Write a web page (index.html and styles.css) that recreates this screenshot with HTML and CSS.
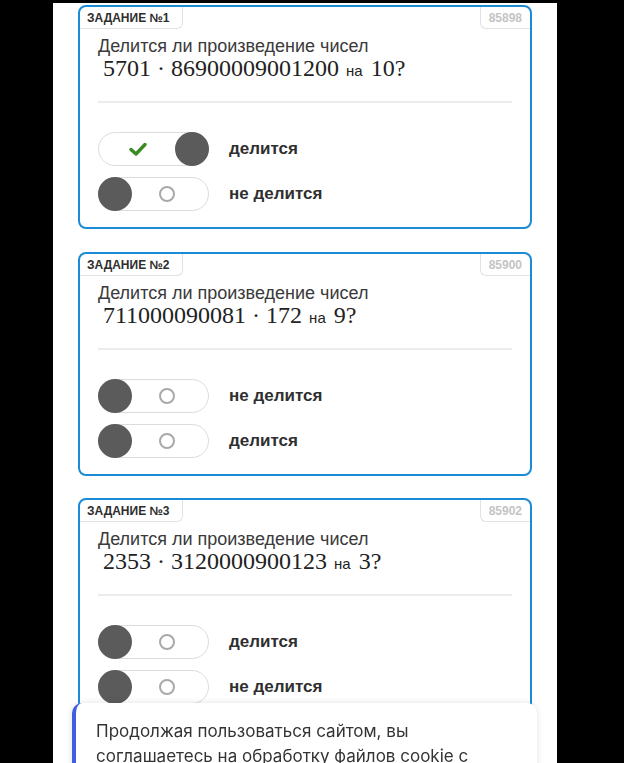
FILE: index.html
```html
<!DOCTYPE html>
<html lang="ru">
<head>
    <meta charset="UTF-8">
    <meta name="viewport" content="width=device-width, initial-scale=1.0">
    <title>Задания</title>
    <link rel="stylesheet" href="styles.css">
</head>
<body>
    <div class="page">
        <div class="task">
            <div class="task-head">
                <span class="task-tag">Задание №1</span>
                <span class="task-id">85898</span>
            </div>
            <div class="task-body">
                <p class="question">Делится ли произведение чисел</p>
                <p class="math"><span>5701</span><span class="op">·</span><span>86900009001200</span><span class="word">на</span><span>10?</span></p>
                <div class="rule"></div>
                <div class="options">
                    <div class="option on">
                        <span class="switch">
                            <svg class="check" width="18" height="14" viewBox="0 0 18 14"><path d="M2 7.5 L7 12 L16 2.5" fill="none" stroke="#3c8a23" stroke-width="3.4" stroke-linecap="round" stroke-linejoin="round"/></svg>
                            <span class="knob"></span>
                        </span>
                        <span class="option-text">делится</span>
                    </div>
                    <div class="option">
                        <span class="switch"><span class="knob"></span><span class="ring"></span></span>
                        <span class="option-text">не делится</span>
                    </div>
                </div>
            </div>
        </div>

        <div class="task">
            <div class="task-head">
                <span class="task-tag">Задание №2</span>
                <span class="task-id">85900</span>
            </div>
            <div class="task-body">
                <p class="question">Делится ли произведение чисел</p>
                <p class="math"><span>711000090081</span><span class="op">·</span><span>172</span><span class="word">на</span><span>9?</span></p>
                <div class="rule"></div>
                <div class="options">
                    <div class="option">
                        <span class="switch"><span class="knob"></span><span class="ring"></span></span>
                        <span class="option-text">не делится</span>
                    </div>
                    <div class="option">
                        <span class="switch"><span class="knob"></span><span class="ring"></span></span>
                        <span class="option-text">делится</span>
                    </div>
                </div>
            </div>
        </div>

        <div class="task">
            <div class="task-head">
                <span class="task-tag">Задание №3</span>
                <span class="task-id">85902</span>
            </div>
            <div class="task-body">
                <p class="question">Делится ли произведение чисел</p>
                <p class="math"><span>2353</span><span class="op">·</span><span>3120000900123</span><span class="word">на</span><span>3?</span></p>
                <div class="rule"></div>
                <div class="options">
                    <div class="option">
                        <span class="switch"><span class="knob"></span><span class="ring"></span></span>
                        <span class="option-text">делится</span>
                    </div>
                    <div class="option">
                        <span class="switch"><span class="knob"></span><span class="ring"></span></span>
                        <span class="option-text">не делится</span>
                    </div>
                </div>
            </div>
        </div>
    </div>

    <div class="cookie">
        <p>Продолжая пользоваться сайтом, вы соглашаетесь на обработку файлов cookie с целью улучшения работы сайта.</p>
    </div>
</body>
</html>
```

FILE: styles.css
```css
:root {
    --blue: #1c8bd6;
    --text: #333333;
    --knob: #5b5b5b;
    --line: #e2e2e2;
}

* {
    margin: 0;
    padding: 0;
    box-sizing: border-box;
}

body {
    background: #000;
    font-family: 'Liberation Sans', Arial, sans-serif;
    color: var(--text);
    padding-top: 3px;
    overflow: hidden;
    height: 763px;
}

.page {
    width: 504px;
    margin-left: 53px;
    background: #fff;
    padding: 2px 25px 0;
    min-height: 760px;
}

.task {
    border: 2px solid var(--blue);
    border-radius: 8px;
    margin-bottom: 22px;
    overflow: hidden;
}

.task:first-child {
    margin-bottom: 23px;
}

.task-head {
    display: flex;
    justify-content: space-between;
    align-items: flex-start;
}

.task-tag,
.task-id {
    font-size: 12px;
    font-weight: 700;
    height: 22px;
    line-height: 22px;
    border-bottom: 1px solid var(--line);
}

.task-tag {
    text-transform: uppercase;
    padding: 0 12px 0 7px;
    border-right: 1px solid var(--line);
    border-bottom-right-radius: 6px;
    color: #2e2e2e;
}

.task-id {
    color: #c4c4c4;
    padding: 0 8px;
    border-left: 1px solid var(--line);
    border-bottom-left-radius: 6px;
}

.task-body {
    padding: 7px 18px 16px;
}

.question {
    font-size: 18px;
    line-height: 20px;
    color: #3a3a3a;
}

.math {
    font-family: 'Liberation Serif', 'DejaVu Serif', serif;
    font-size: 24px;
    line-height: 24px;
    padding-left: 5px;
    color: #222;
}

.math .op {
    margin: 0 6px;
}

.math .word {
    font-family: 'Liberation Sans', Arial, sans-serif;
    font-size: 15px;
    margin: 0 8px 0 7px;
}

.rule {
    height: 2px;
    background: #ececec;
    margin-top: 18px;
}

.options {
    margin-top: 29px;
    display: flex;
    flex-direction: column;
    gap: 11px;
}

.option {
    display: flex;
    align-items: center;
    gap: 20px;
}

.switch {
    position: relative;
    width: 111px;
    height: 34px;
    border: 1px solid #dcdcdc;
    border-radius: 17px;
    display: flex;
    align-items: center;
    flex-shrink: 0;
}

.knob {
    width: 34px;
    height: 34px;
    border-radius: 50%;
    background: var(--knob);
    margin: -1px;
}

.option.on .switch {
    justify-content: space-between;
}

.check {
    margin-left: 30px;
}

.ring {
    width: 16px;
    height: 16px;
    border: 2px solid #a9a9a9;
    border-radius: 50%;
    margin-left: 28px;
}

.option-text {
    font-size: 17px;
    font-weight: 700;
    color: #2f2f2f;
}

.cookie {
    position: fixed;
    left: 72px;
    top: 703px;
    width: 465px;
    height: 120px;
    background: #fff;
    border-left: 4px solid #3f5fe0;
    border-radius: 10px;
    box-shadow: 0 0 6px rgba(0, 0, 0, 0.12);
    padding: 16px 20px 0 20px;
}

.cookie p {
    font-family: Inter, 'Liberation Sans', sans-serif;
    font-size: 17px;
    line-height: 25px;
    color: #333;
}
```
